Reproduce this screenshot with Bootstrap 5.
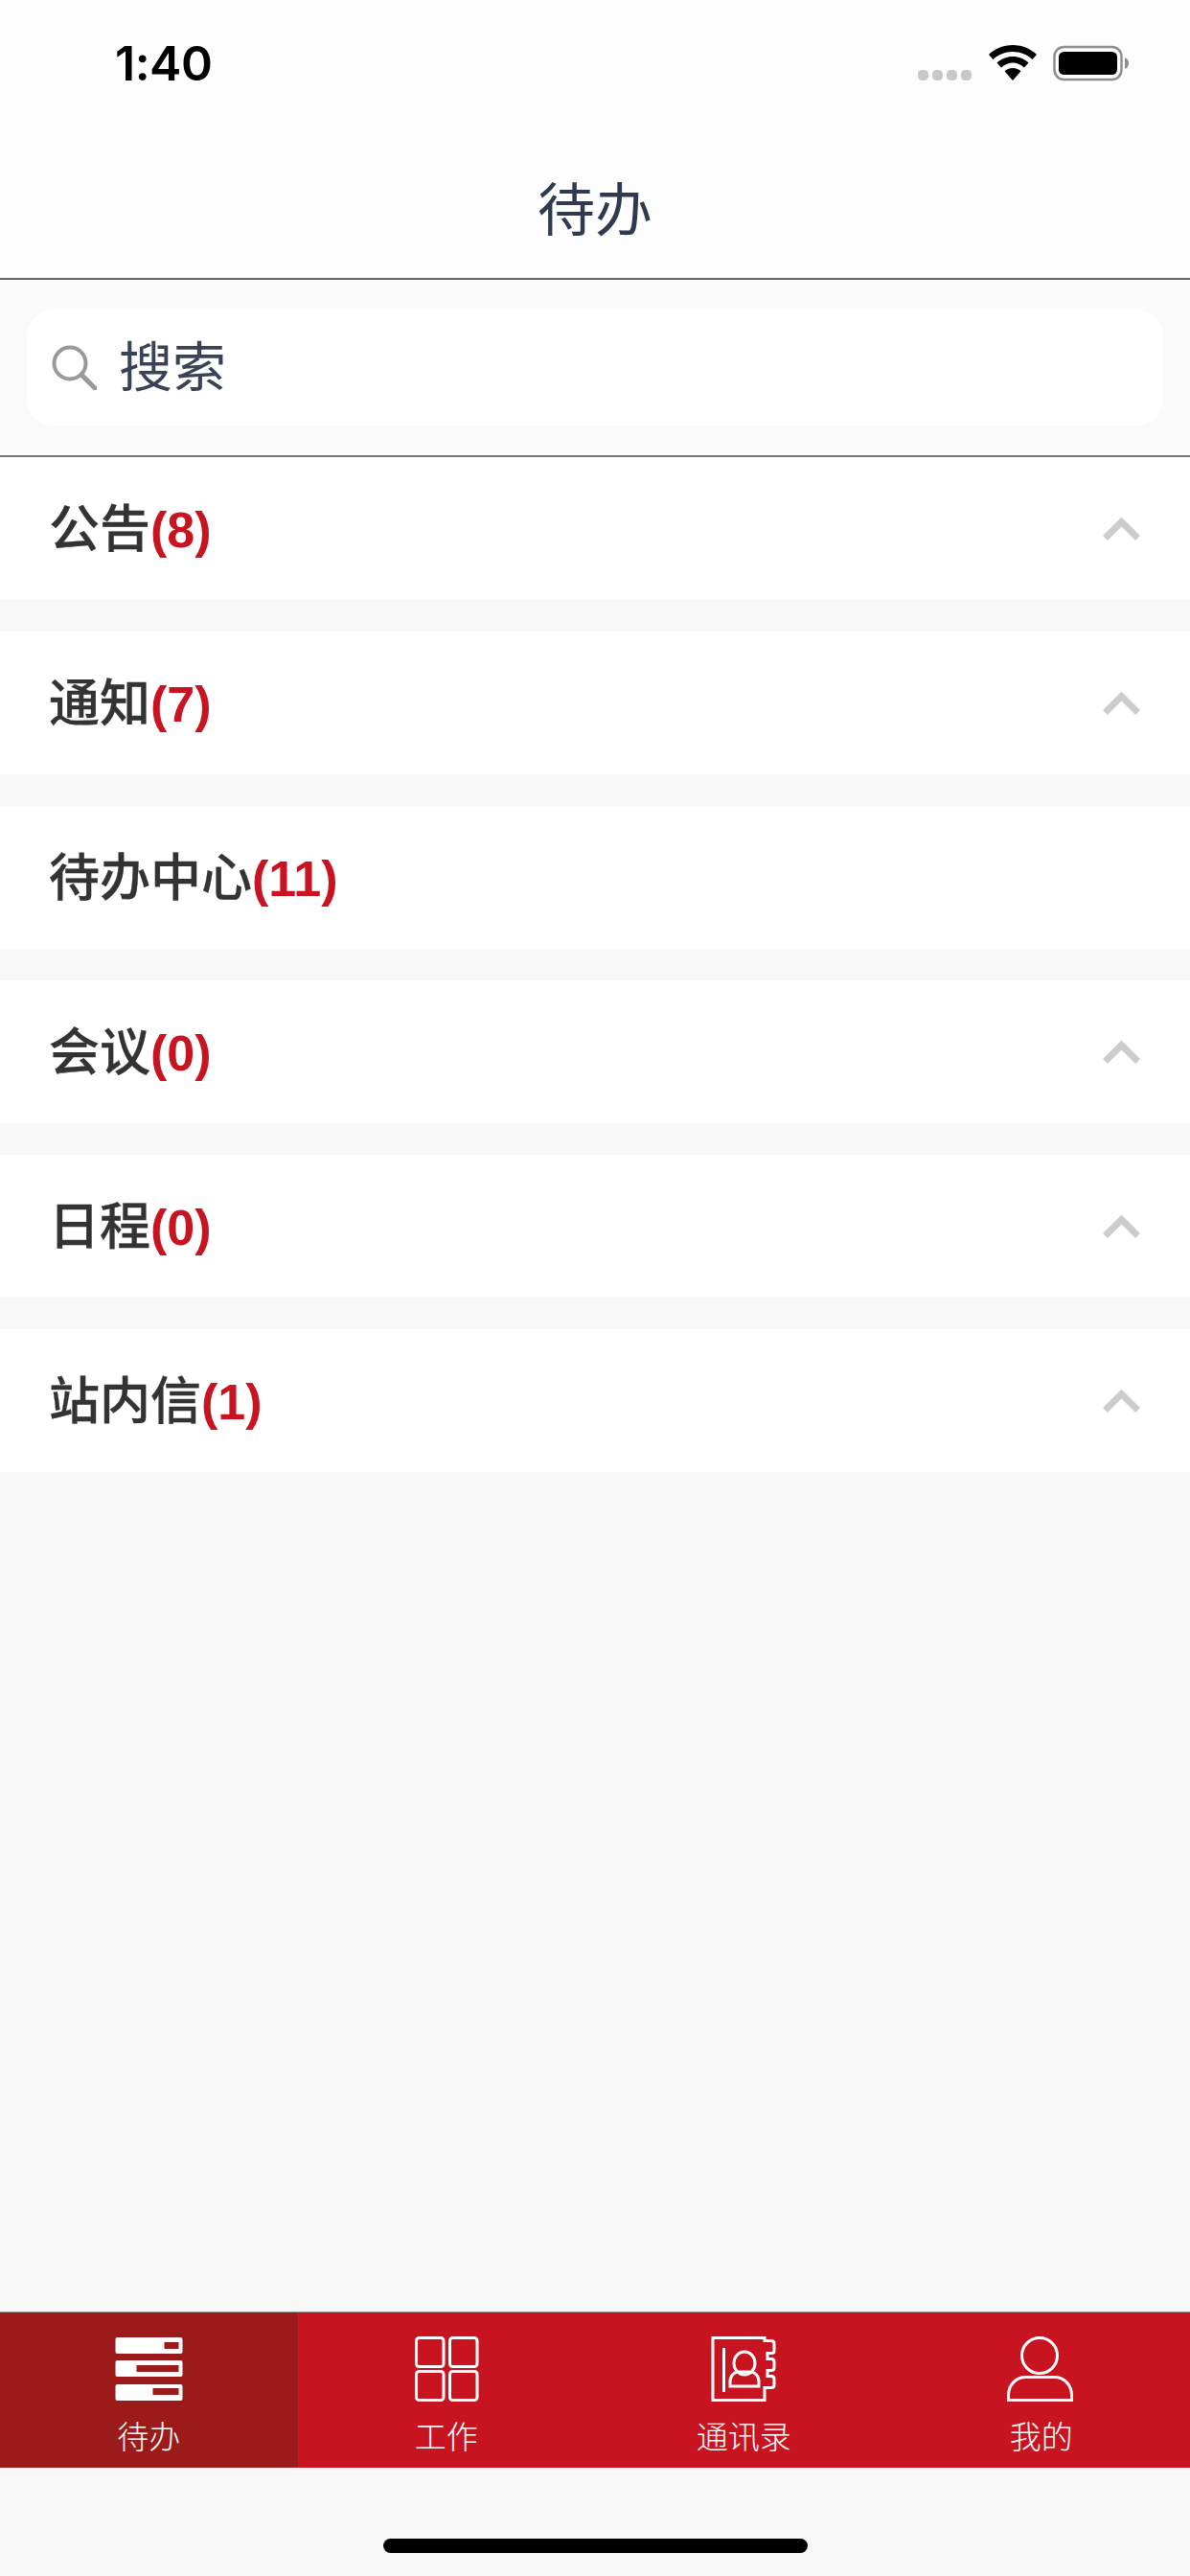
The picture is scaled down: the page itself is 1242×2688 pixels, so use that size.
<!DOCTYPE html>
<html lang="zh-CN">
<head>
    <meta charset="UTF-8">
    <meta name="viewport" content="width=device-width, initial-scale=1.0">
    <title>待办</title>
    <link href="https://cdn.jsdelivr.net/npm/bootstrap@5.3.3/dist/css/bootstrap.min.css" rel="stylesheet">
    <style>
        body {
            width: 1242px;
            height: 2688px;
            background-color: #f8f8f8;
            font-family: "Liberation Sans", "Noto Sans CJK SC", sans-serif;
            overflow: hidden;
        }
        /* 顶部状态栏 */
        .status-bar { height: 120px; padding: 0 64px 0 120px; background-color: #fdfdfd; }
        .status-time { font-family: "Inter", sans-serif; font-size: 50px; font-weight: 600; line-height: 1; color: #000; margin-top: 41px; letter-spacing: -.5px; }
        .status-icons { margin-top: 47px; }
        .title-bar { height: 172px; background-color: #fdfdfd; border-bottom: 2px solid #666; font-size: 60px; line-height: 1; color: #2f3a50; padding-top: 32px; }
        /* 搜索 */
        .search-wrap { height: 185px; padding: 31px 28px 0; background-color: #fafafa; border-bottom: 2px solid #777; }
        .search-box { height: 121px; background-color: #fff; border-radius: 28px; padding-left: 26px; gap: 23px; font-size: 56px; color: #3a4356; line-height: 1; }
        /* 列表 */
        .todo-list { gap: 33px; }
        .todo-row { height: 149px; background-color: #fff; padding: 0 51px 0 51px; }
        .todo-name { font-size: 53px; font-weight: 500; line-height: 1; color: #333; -webkit-text-stroke: .3px #333; padding-top: 1px; }
        .todo-count { font-family: "Liberation Sans", sans-serif; font-size: 52px; font-weight: 700; color: #c81421; -webkit-text-stroke: 0; }
        /* 底部标签栏 */
        .tab-bar { height: 163px; background-color: #c81421; border-top: 1px solid #999; }
        .tab-item { height: 162px; color: #fff; font-size: 33px; font-weight: 300; line-height: 1; padding-top: 25px; }
        .tab-item svg { display: block; margin-bottom: 21px; }
        .tab-active { background-color: #9b1b1b; }
        .home-area { height: 113px; padding-top: 74px; }
        .home-bar { width: 443px; height: 15px; background-color: #000; border-radius: 8px; }
    </style>
</head>
<body class="d-flex flex-column">
    <header class="status-bar d-flex justify-content-between align-items-start">
        <div class="status-time">1:40</div>
        <svg class="status-icons" width="220" height="38" viewBox="958 47 220 38">
            <g fill="#c8c8c8">
                <rect x="958" y="73" width="11" height="11" rx="4.500"/>
                <rect x="973" y="73" width="11" height="11" rx="4.500"/>
                <rect x="988" y="73" width="11" height="11" rx="4.500"/>
                <rect x="1003" y="73" width="11" height="11" rx="4.500"/>
            </g>
            <path d="M1057 47c10 0 19 4 25 10l-4.500 5c-5-5-12.500-8-20.500-8s-15.500 3-20.500 8l-4.500-5c6-6 15-10 25-10z" fill="#000"/>
            <path d="M1057 59c6.500 0 12 2.500 16.500 6.500l-4.500 5c-3-3-7.500-5-12-5s-9 2-12 5l-4.500-5c4.500-4 10-6.500 16.500-6.500z" fill="#000"/>
            <path d="M1057 71c3.500 0 6.500 1.300 8.500 3.300L1057 84l-8.500-9.700c2-2 5-3.300 8.500-3.300z" fill="#000"/>
            <rect x="1100.500" y="49" width="70" height="34" rx="10" fill="none" stroke="#8e8e8e" stroke-width="2.500"/>
            <rect x="1105" y="54" width="61" height="24" rx="5.500" fill="#000"/>
            <path d="M1174 60c2.500 1 4 3.300 4 6s-1.500 5-4 6z" fill="#8e8e8e"/>
        </svg>
    </header>

    <div class="title-bar d-flex justify-content-center align-items-center">待办</div>

    <div class="search-wrap">
        <div class="search-box d-flex align-items-center">
            <svg width="47" height="47" viewBox="0 0 47 47" fill="none" stroke="#999" stroke-width="4">
                <circle cx="19" cy="19" r="16.500"/>
                <path d="M31 31l14 14" stroke-width="5" stroke-linecap="round"/>
            </svg>
            <span>搜索</span>
        </div>
    </div>

    <main class="todo-list flex-grow-1 d-flex flex-column">
        <div class="todo-row d-flex justify-content-between align-items-center">
            <div class="todo-name">公告<span class="todo-count">(8)</span></div>
            <svg width="41" height="26" viewBox="0 0 41 26" fill="none" stroke="#ccc" stroke-width="7"><path d="M3.500 22.500l17-17 17 17"/></svg>
        </div>
        <div class="todo-row d-flex justify-content-between align-items-center">
            <div class="todo-name">通知<span class="todo-count">(7)</span></div>
            <svg width="41" height="26" viewBox="0 0 41 26" fill="none" stroke="#ccc" stroke-width="7"><path d="M3.500 22.500l17-17 17 17"/></svg>
        </div>
        <div class="todo-row d-flex justify-content-between align-items-center">
            <div class="todo-name">待办中心<span class="todo-count">(11)</span></div>
        </div>
        <div class="todo-row d-flex justify-content-between align-items-center">
            <div class="todo-name">会议<span class="todo-count">(0)</span></div>
            <svg width="41" height="26" viewBox="0 0 41 26" fill="none" stroke="#ccc" stroke-width="7"><path d="M3.500 22.500l17-17 17 17"/></svg>
        </div>
        <div class="todo-row d-flex justify-content-between align-items-center">
            <div class="todo-name">日程<span class="todo-count">(0)</span></div>
            <svg width="41" height="26" viewBox="0 0 41 26" fill="none" stroke="#ccc" stroke-width="7"><path d="M3.500 22.500l17-17 17 17"/></svg>
        </div>
        <div class="todo-row d-flex justify-content-between align-items-center">
            <div class="todo-name">站内信<span class="todo-count">(1)</span></div>
            <svg width="41" height="26" viewBox="0 0 41 26" fill="none" stroke="#ccc" stroke-width="7"><path d="M3.500 22.500l17-17 17 17"/></svg>
        </div>
    </main>

    <!-- 底部标签栏 -->
    <nav class="tab-bar row g-0">
        <div class="col-3 tab-item tab-active d-flex flex-column align-items-center">
            <svg width="72" height="68" viewBox="-.5 0 72 68">
                <path fill="#fff" fill-rule="evenodd" d="M3 1h66a2 2 0 0 1 2 2v13a2 2 0 0 1-2 2H3a2 2 0 0 1-2-2V3a2 2 0 0 1 2-2zM52 6v7h15V6z"/>
                <path fill="#fff" fill-rule="evenodd" d="M3 25h66a2 2 0 0 1 2 2v13a2 2 0 0 1-2 2H3a2 2 0 0 1-2-2V27a2 2 0 0 1 2-2zM23 30v7h44v-7z"/>
                <path fill="#fff" fill-rule="evenodd" d="M3 50h66a2 2 0 0 1 2 2v13a2 2 0 0 1-2 2H3a2 2 0 0 1-2-2V52a2 2 0 0 1 2-2zM40 54v7h27v-7z"/>
            </svg>
            待办
        </div>
        <div class="col-3 tab-item d-flex flex-column align-items-center">
            <svg width="68" height="68" viewBox="0 0 68 68" fill="none" stroke="#fff" stroke-width="3">
                <rect x="2.500" y="1.500" width="28.500" height="30" rx="3"/>
                <rect x="37.500" y="1.500" width="28.500" height="30" rx="3"/>
                <rect x="2.500" y="36.500" width="28.500" height="30" rx="3"/>
                <rect x="37.500" y="36.500" width="28.500" height="30" rx="3"/>
            </svg>
            工作
        </div>
        <div class="col-3 tab-item d-flex flex-column align-items-center">
            <svg width="68" height="68" viewBox="0 0 68 68" fill="none" stroke="#fff" stroke-width="3">
                <path d="M2 1.500H56v3h7c2 0 3 1 3 3v8c0 1-1 2-3 2h-4v6h4c2 0 3 1 3 3v6c0 2-1 3-3 3h-4v6h4c2 0 3 1 3 3v6c0 2-1 3-3 3h-7v13H2z"/>
                <path d="M13.500 12v46"/>
                <ellipse cx="35" cy="28" rx="11" ry="12"/>
                <path d="M20 52v-5c0-6 4-10 10-10h10c6 0 10 4 10 10v5z"/>
            </svg>
            通讯录
        </div>
        <div class="col-3 tab-item d-flex flex-column align-items-center">
            <svg width="72" height="68" viewBox="0 0 72 68" fill="none" stroke="#fff" stroke-width="3">
                <ellipse cx="34" cy="20" rx="18.500" ry="18.500"/>
                <path d="M1.500 66.500v-5c0-11 8-19 18-19h30c10 0 18 8 18 19v5z"/>
            </svg>
            我的
        </div>
    </nav>

    <div class="home-area d-flex justify-content-center">
        <div class="home-bar"></div>
    </div>

    <script src="https://cdn.jsdelivr.net/npm/bootstrap@5.3.3/dist/js/bootstrap.bundle.min.js"></script>
</body>
</html>
